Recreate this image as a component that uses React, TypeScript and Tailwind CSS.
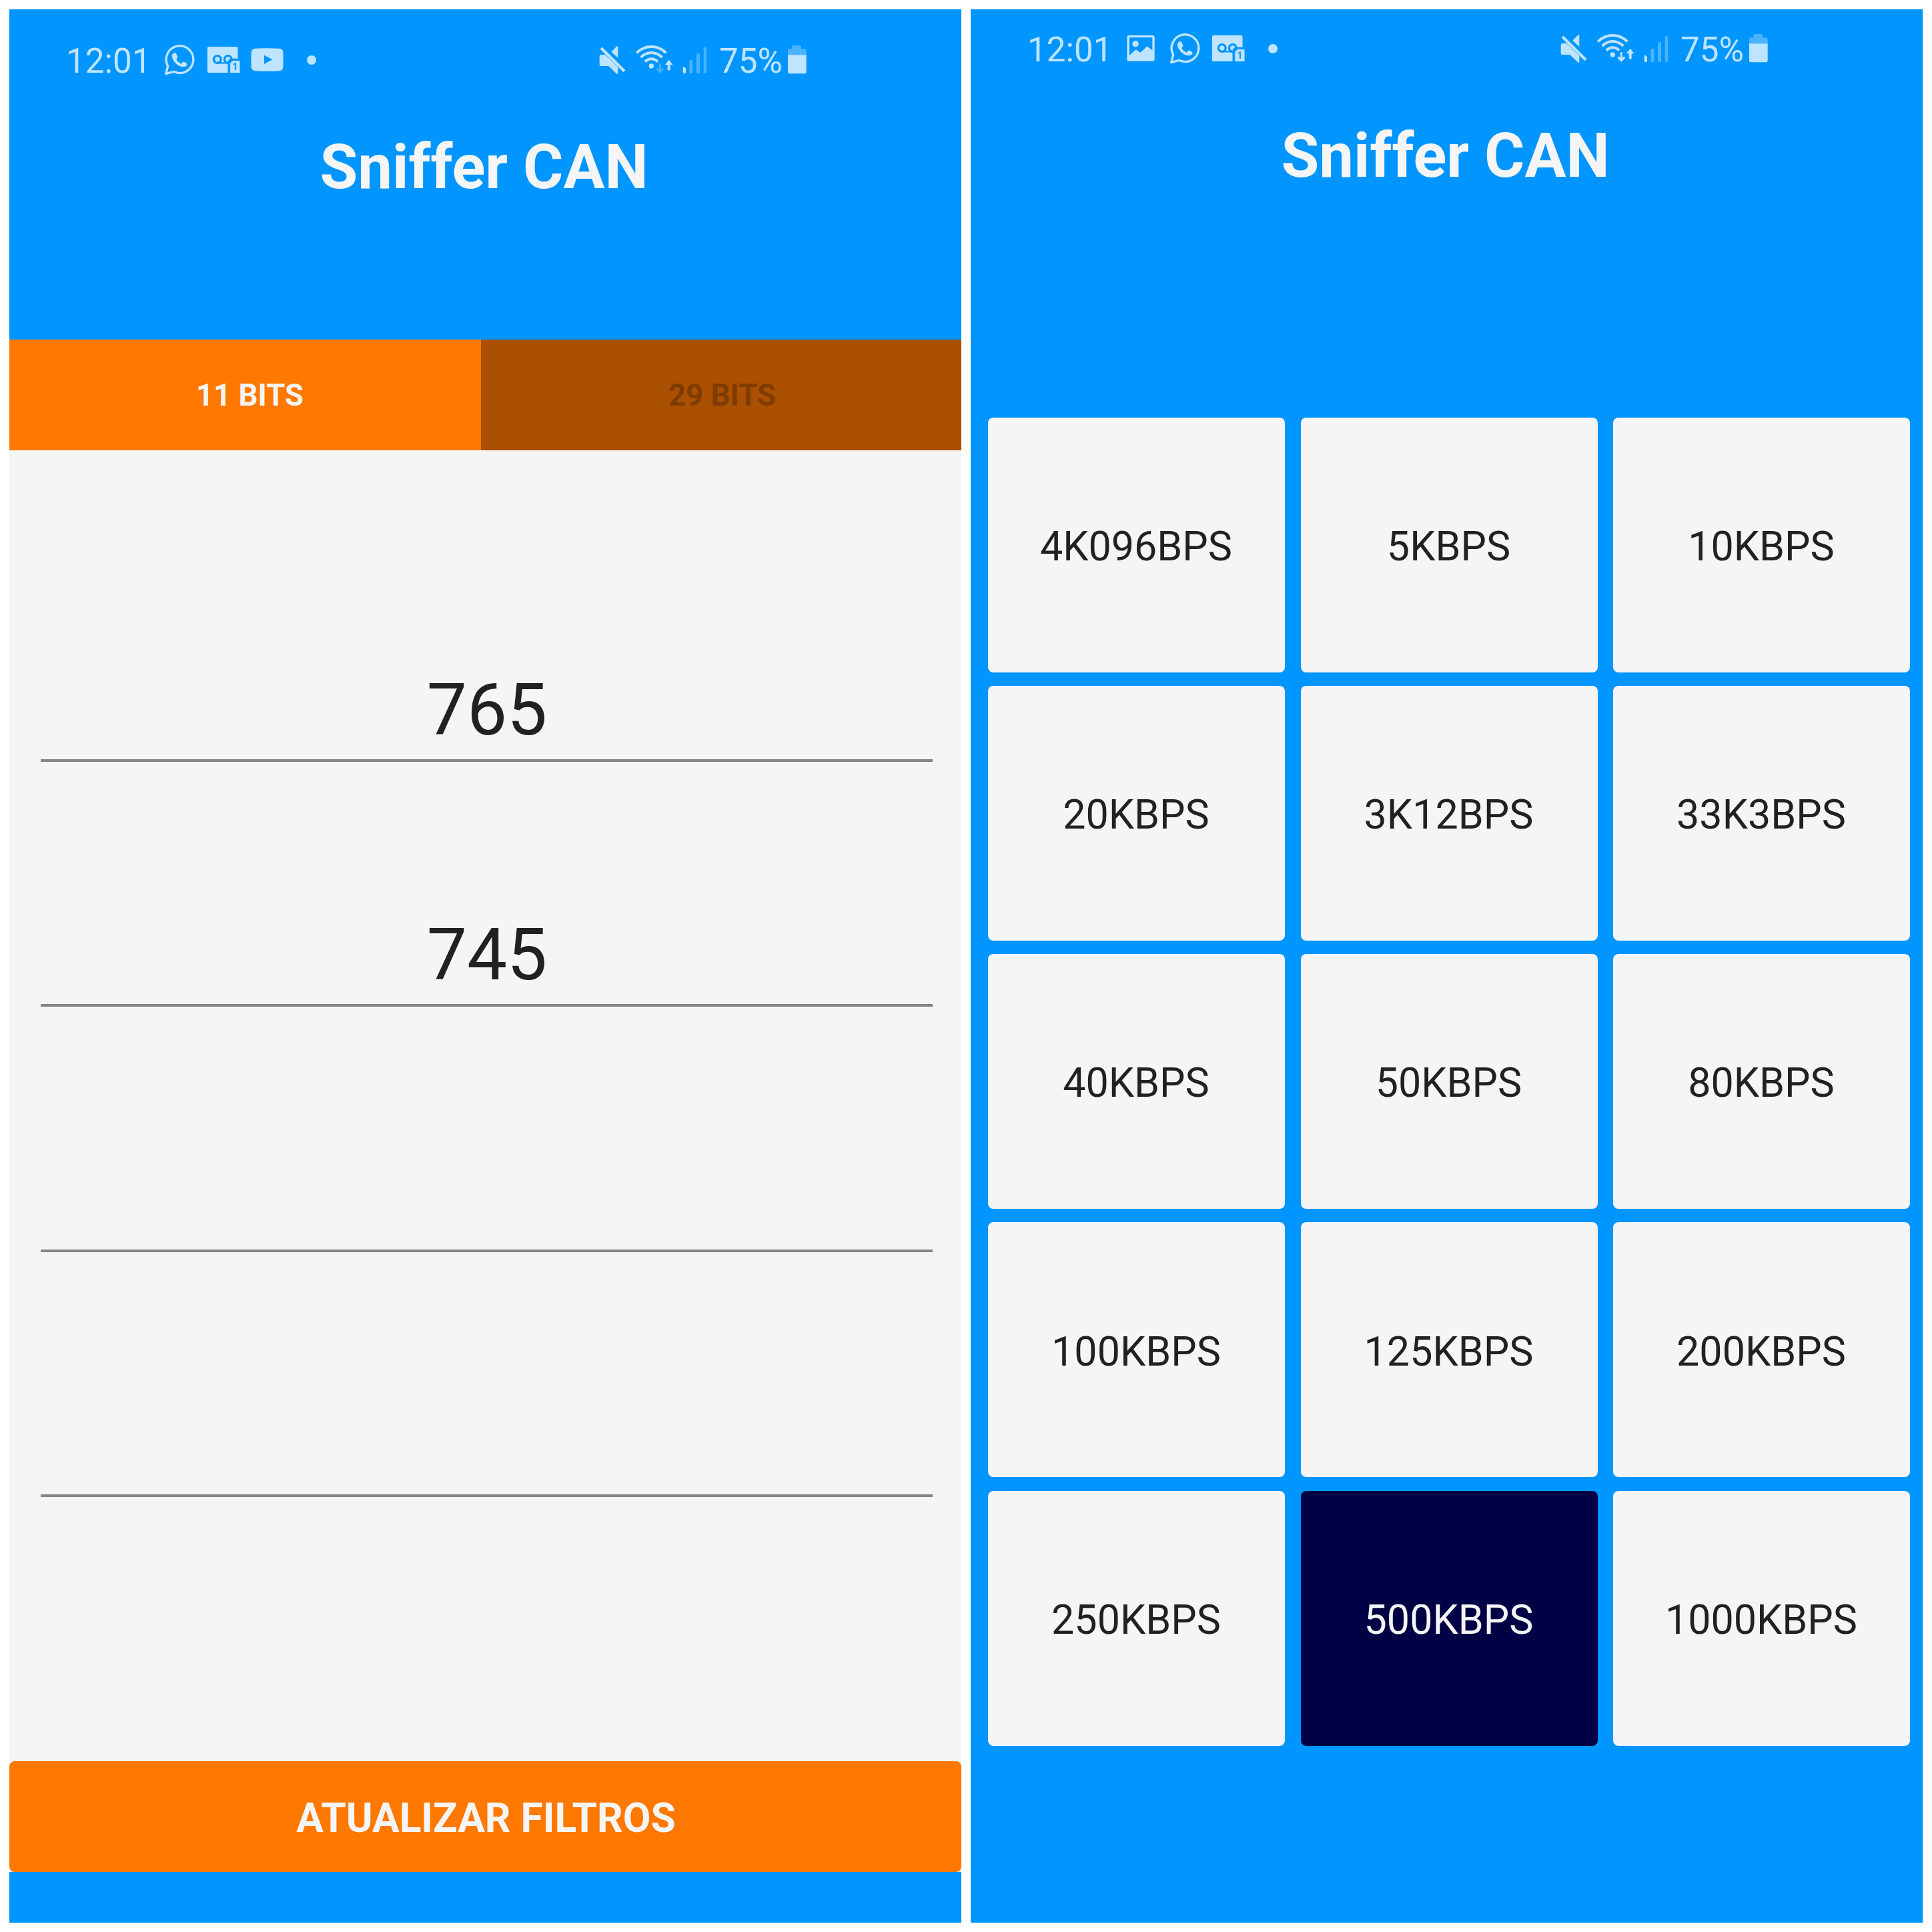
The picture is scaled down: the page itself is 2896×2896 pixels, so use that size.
import React from "react";

const TINT = "#bfe4ff";
const SKY = "#0095ff";

function WhatsAppIcon() {
  return (
    <svg className="h-[60px] w-[50px] shrink-0" viewBox="492 30 150 180" fill={TINT}>
      <path
        d="M506 182L515 147A61 61 0 1 1 541 172Z"
        fill="none"
        stroke={TINT}
        strokeWidth="10"
        strokeLinejoin="round"
      />
      <path d="M541 88L549 88Q552 89 553 92L559 106Q559 110 553 117Q560 131 575 137L581 129Q584 126 588 128L600 135Q603 137 601 142Q597 151 586 151Q565 151 548 133Q532 114 534 98Q536 90 541 88Z" />
    </svg>
  );
}

function VoicemailIcon() {
  return (
    <svg className="h-[60px] w-[50px] shrink-0" viewBox="688.5 30 150 180">
      <rect x="691" y="60" width="137" height="117" rx="6" fill={TINT} />
      <g fill="none" stroke={SKY} strokeWidth="10">
        <circle cx="736" cy="117" r="16" />
        <circle cx="784" cy="117" r="16" />
        <path d="M736 133H784" strokeWidth="7" />
      </g>
      <path d="M783 180V131Q783 121 793 113H842V180Z" fill={SKY} />
      <path d="M794 177V134L806 123H831Q837 123 837 129V177Z" fill={TINT} />
      <text
        x="815"
        y="166"
        textAnchor="middle"
        fontSize="42"
        fontWeight="700"
        fontFamily="Roboto, sans-serif"
        fill={SKY}
      >
        1
      </text>
    </svg>
  );
}

function VideoIcon() {
  return (
    <svg className="h-[60px] w-[50px] shrink-0" viewBox="885 30 150 180">
      <path
        d="M908 68Q961 65 1016 68Q1032 69 1033 84Q1035 118 1033 153Q1032 168 1016 169Q961 172 908 169Q893 168 890 153Q888 118 890 84Q893 69 908 68Z"
        fill={TINT}
      />
      <path d="M948 98V138L985 118Z" fill={SKY} />
    </svg>
  );
}

function ImageIcon() {
  return (
    <svg className="h-[60px] w-[50px] shrink-0" viewBox="495 38 150 180">
      <rect x="508" y="68" width="124" height="116" rx="9" fill={TINT} />
      <path d="M519 78H622V135L598 117L568 146L548 132L519 158Z" fill={SKY} />
      <circle cx="546" cy="106" r="14" fill={TINT} />
    </svg>
  );
}

function MutedIcon() {
  return (
    <svg className="h-[60px] w-[46px] shrink-0" viewBox="75 30 138 180" fill={TINT}>
      <path d="M139 83L164 58Q169 56 169 61V111Z" />
      <path d="M86 103Q86 96 93 96H112L169 152V180Q167 185 162 181L127 147H93Q86 147 86 140Z" />
      <path d="M93 66L198 170" stroke={TINT} strokeWidth="13" />
    </svg>
  );
}

function WifiIcon({ receiving }: { receiving: boolean }) {
  return (
    <svg className="ml-[9px] h-[60px] w-[62px] shrink-0" viewBox="240 30 186 180">
      <g fill="none" stroke={TINT} strokeWidth="12">
        <path d="M253 88Q281 60 319 60T385 88" />
        <path d="M272 108Q292 87 319 87T367 108" />
        <path d="M291 128Q303 115 319 115T348 128" />
      </g>
      <circle cx="319" cy="147" r="11" fill={TINT} />
      <path
        d="M358 136V173M343 158L358 173L373 158"
        fill="none"
        stroke={TINT}
        strokeWidth="9"
        strokeOpacity={receiving ? 1 : 0.35}
      />
      <path d="M398 166V128" stroke={TINT} strokeWidth="12" />
      <path d="M398 120L414 141H382Z" fill={TINT} stroke={TINT} strokeWidth="2" />
    </svg>
  );
}

function SignalIcon() {
  return (
    <svg className="ml-[9px] h-[60px] w-[40px] shrink-0" viewBox="453 30 120 180" fill={TINT}>
      <path d="M461 150Q474 150 474 163V176Q474 180 469 180Q461 180 461 174Z" />
      <g opacity="0.38">
        <rect x="490" y="120" width="15" height="60" rx="5" />
        <rect x="522" y="90" width="15" height="90" rx="5" />
        <rect x="554" y="62" width="13" height="118" rx="5" />
      </g>
    </svg>
  );
}

function BatteryIcon() {
  return (
    <svg className="ml-auto h-[60px] w-[31px] shrink-0" viewBox="927 30 93 180" fill={TINT}>
      <path
        d="M933 97V76Q933 70 940 70H952V60Q952 54 957 54H987Q993 54 993 60V70H1009Q1016 70 1016 76V97Z"
        opacity="0.38"
      />
      <path d="M933 97H1016V174Q1016 181 1009 181H940Q933 181 933 174Z" />
    </svg>
  );
}

function StatusBar({ icons, receiving }: { icons: React.ReactNode; receiving: boolean }) {
  return (
    <div className="flex h-[60px] items-center pl-[85px] text-[51.2px] leading-[56px] text-[#bfe4ff]">
      <span className="mt-1 w-[145px] shrink-0">12:01</span>
      <div className="flex gap-[15.5px]">{icons}</div>
      <span className="ml-[35px] size-3.5 shrink-0 rounded-full bg-[#bfe4ff]" />
      <div className="ml-[421px] flex w-[315px] items-center">
        <MutedIcon />
        <WifiIcon receiving={receiving} />
        <SignalIcon />
        <span className="mt-1 ml-[17px] w-0 whitespace-nowrap">75%</span>
        <BatteryIcon />
      </div>
    </div>
  );
}

function Title() {
  return (
    <h1 className="mt-[71px] pr-1 text-center text-[92.3px] leading-[120px] font-bold">
      Sniffer CAN
    </h1>
  );
}

const filters = ["765", "745", "", ""];

function FilterScreen() {
  return (
    <section className="flex w-[1427px] flex-col bg-[#0095ff] text-[#f5f5f5]">
      <header className="h-[495px] pt-[46px]">
        <StatusBar
          receiving={false}
          icons={
            <>
              <WhatsAppIcon />
              <VoicemailIcon />
              <VideoIcon />
            </>
          }
        />
        <Title />
      </header>
      <nav className="flex h-[166px] text-[45.5px] font-bold">
        <button className="w-[707px] bg-[#ff7800] pt-0.5 pl-3.5">11 BITS</button>
        <button className="flex-1 bg-[#aa5000] pt-0.5 pl-[3px] text-[#7f3c00]">29 BITS</button>
      </nav>
      <main className="flex h-[1965px] flex-col bg-[#f5f5f5] pt-[99px] pr-[43px] pl-[47px]">
        {filters.map((value, i) => (
          <div
            key={i}
            className="flex h-[367.5px] items-end justify-center border-b-4 border-[#858585] pb-[3px] pl-px text-[107px] leading-[140px] text-[#212121]"
          >
            {value}
          </div>
        ))}
      </main>
      <div className="bg-[#f5f5f5]">
        <button className="block h-[166px] w-full rounded-lg bg-[#ff7800] pt-[7px] pl-0.5 text-[60.5px] font-bold">
          ATUALIZAR FILTROS
        </button>
      </div>
    </section>
  );
}

const rates = [
  "4K096BPS", "5KBPS", "10KBPS",
  "20KBPS", "3K12BPS", "33K3BPS",
  "40KBPS", "50KBPS", "80KBPS",
  "100KBPS", "125KBPS", "200KBPS",
  "250KBPS", "500KBPS", "1000KBPS",
];
const selectedRate = "500KBPS";

function RateScreen() {
  return (
    <section className="w-[1427px] bg-[#0095ff] text-[#f5f5f5]">
      <header className="h-[611.5px] pt-[29px]">
        <StatusBar
          receiving
          icons={
            <>
              <ImageIcon />
              <WhatsAppIcon />
              <VoicemailIcon />
            </>
          }
        />
        <Title />
      </header>
      <div className="grid auto-rows-[382px] grid-cols-[445px_445px_445px] gap-x-[23.5px] gap-y-[20.3px] pl-[26px]">
        {rates.map((rate) => (
          <button
            key={rate}
            className={
              rate === selectedRate
                ? "rounded-lg bg-[#000044] pt-1.5 pr-px text-[61px] text-[#f5f5f5]"
                : "rounded-lg bg-[#f5f5f5] pt-1.5 pr-px text-[61px] text-[#212121]"
            }
          >
            {rate}
          </button>
        ))}
      </div>
    </section>
  );
}

export default function App() {
  return (
    <div className="flex h-[2896px] w-[2896px] gap-3.5 bg-white p-3.5 font-['Roboto',sans-serif]">
      <FilterScreen />
      <RateScreen />
    </div>
  );
}
